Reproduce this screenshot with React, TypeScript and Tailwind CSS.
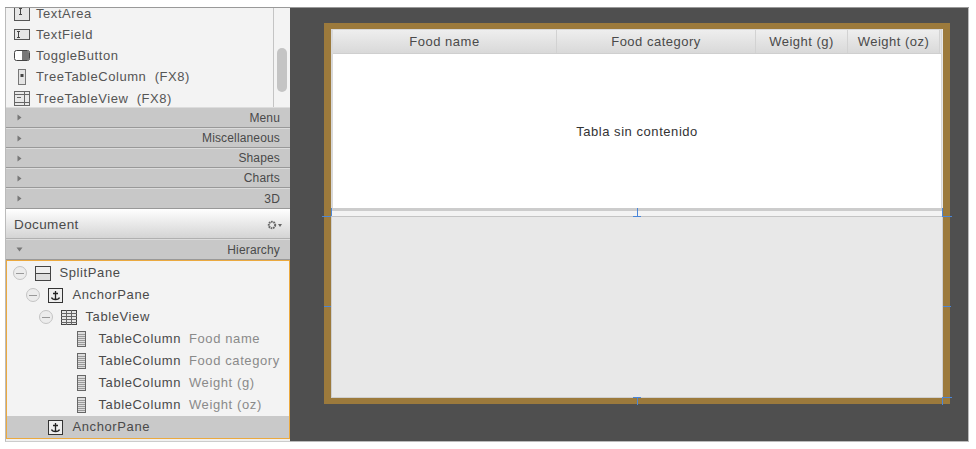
const font = "font-['Liberation_Sans',Arial,sans-serif]";

const paletteItems = [
  { name: "TextArea", icon: "area" },
  { name: "TextField", icon: "field" },
  { name: "ToggleButton", icon: "toggle" },
  { name: "TreeTableColumn  (FX8)", icon: "column" },
  { name: "TreeTableView  (FX8)", icon: "table" },
];

const sections = [
  { name: "Menu", h: "h-[21px]" },
  { name: "Miscellaneous", h: "h-[20px]" },
  { name: "Shapes", h: "h-[20px]" },
  { name: "Charts", h: "h-[20px]" },
  { name: "3D", h: "h-[21px]" },
];

const columns = [
  { name: "Food name", w: "w-[224px]" },
  { name: "Food category", w: "w-[199px]" },
  { name: "Weight (g)", w: "w-[92px]" },
  { name: "Weight (oz)", w: "w-[92px]" },
];

function PaletteIcon({ type }: { type: string }) {
  if (type === "area")
    return (
      <svg width="16" height="16" viewBox="0 0 16 16">
        <rect x="0.5" y="0.5" width="15" height="15" fill="#e6e6e6" stroke="#555" />
        <path d="M5 3.5h3M6.5 3.5v6M5 9.5h3" stroke="#444" fill="none" />
      </svg>
    );
  if (type === "field")
    return (
      <svg width="16" height="11" viewBox="0 0 16 11">
        <rect x="0.5" y="0.5" width="15" height="10" fill="#e6e6e6" stroke="#555" />
        <path d="M3 2.5h3M4.5 2.5v6M3 8.5h3" stroke="#444" fill="none" />
      </svg>
    );
  if (type === "toggle")
    return (
      <svg width="16" height="11" viewBox="0 0 16 11">
        <rect x="0.5" y="0.5" width="15" height="10" rx="2" fill="#fff" stroke="#444" />
        <path d="M8 1h5.500a1.500 1.500 0 0 1 1.500 1.500v6a1.500 1.500 0 0 1-1.500 1.500H8z" fill="#777" />
      </svg>
    );
  if (type === "column")
    return (
      <svg width="16" height="16" viewBox="0 0 16 16">
        <rect x="4.500" y="0.500" width="7" height="15" fill="#e4e4e4" stroke="#777" />
        <rect x="6.500" y="5" width="3" height="3" fill="#444" />
      </svg>
    );
  return (
    <svg width="16" height="15" viewBox="0 0 16 15">
      <rect x="0.5" y="0.5" width="15" height="14" fill="#e8e8e8" stroke="#666" />
      <path d="M0 3.500h16M0 11.500h16M10.500 0v15M3 6.500h4" stroke="#666" fill="none" />
    </svg>
  );
}

function Chevron({ open }: { open?: boolean }) {
  return (
    <svg width="7" height="7" viewBox="0 0 7 7" className="shrink-0">
      <path d={open ? "M0.500 1.500h6L3.500 5.500z" : "M1.500 0.500v6L5.500 3.500z"} fill="#777" />
    </svg>
  );
}

function SectionRow({ name, h, open }: { name: string; h: string; open?: boolean }) {
  return (
    <div className={`${h} flex items-center justify-between pl-[10px] pr-[10px] bg-[#c8c8c8] border-b border-b-[#999] border-t border-t-[#dcdcdc] text-[12px] tracking-[0.15px] text-[#4a4a4a]`}>
      <Chevron open={open} />
      <span>{name}</span>
    </div>
  );
}

function Collapse() {
  return (
    <span className="w-[14px] h-[14px] rounded-full border border-[#c4c4c4] bg-[#ececec] flex items-center justify-center shrink-0">
      <span className="w-[8px] h-px bg-[#999]" />
    </span>
  );
}

function TreeIcon({ type }: { type: string }) {
  if (type === "split")
    return (
      <svg width="16" height="15" viewBox="0 0 16 15">
        <rect x="0.5" y="0.5" width="15" height="14" fill="#eee" stroke="#444" />
        <path d="M0 7.500h16" stroke="#444" />
        <rect x="1" y="8" width="14" height="6" fill="#ddd" />
      </svg>
    );
  if (type === "anchor")
    return (
      <svg width="15" height="15" viewBox="0 0 15 15">
        <rect x="0.5" y="0.5" width="14" height="14" fill="#eee" stroke="#333" />
        <path d="M7.500 3v8.500M5 5.500h5M3.500 9.500c.5 1.500 2 2 4 2s3.500-.5 4-2" stroke="#222" strokeWidth="1.300" fill="none" />
      </svg>
    );
  if (type === "table")
    return (
      <svg width="16" height="15" viewBox="0 0 16 15">
        <rect x="0.5" y="0.5" width="15" height="14" fill="#e6e6e6" stroke="#444" />
        <path d="M0 3.500h16M0 6.500h16M0 9.500h16M0 12.500h16M5.500 0v15M10.500 0v15" stroke="#666" fill="none" />
      </svg>
    );
  return (
    <svg width="9" height="16" viewBox="0 0 9 16">
      <rect x="0.5" y="0.5" width="8" height="15" fill="#ddd" stroke="#666" />
      <path d="M1 3.500h7M1 5.500h7M1 7.500h7M1 9.500h7M1 11.500h7M1 13.500h7" stroke="#999" fill="none" />
    </svg>
  );
}

function TreeRow({ pad, icon, label, hint, toggle, selected }: {
  pad: string; icon: string; label: string; hint?: string; toggle?: boolean; selected?: boolean;
}) {
  return (
    <div className={`h-[22px] flex items-center ${pad} ${selected ? "bg-[#c9c9c9]" : ""}`}>
      <span className="w-[14px] mr-[8px] flex justify-center shrink-0">{toggle && <Collapse />}</span>
      <span className="w-[16px] mr-[9px] flex justify-center shrink-0"><TreeIcon type={icon} /></span>
      <span className="text-[#4a4a4a] whitespace-nowrap">{label}</span>
      {hint && <span className="ml-[8px] text-[#8a8a8a] whitespace-nowrap">{hint}</span>}
    </div>
  );
}

function Handle({ className }: { className: string }) {
  return <span className={`absolute bg-[#4a86d8] ${className}`} />;
}

export default function App() {
  return (
    <div className={`w-[976px] h-[449px] bg-white overflow-hidden pt-[7px] pl-[5px] ${font}`}>
      <div className="flex w-[964px] h-[435px] border-t border-t-[#999]">
        {/* left column */}
        <div className="w-[285px] shrink-0 flex flex-col border-l border-l-[#bbb] border-b border-b-[#ccc] bg-[#f1f1f1]">
          <div className="h-[99px] flex overflow-hidden bg-[#f3f3f3]">
            <div className="flex-1 -mt-[5.200px] text-[13px] leading-[11px] tracking-[0.55px] text-[#555] pl-[8px]">
              {paletteItems.map((item) => (
                <div key={item.name} className="h-[21.200px] flex items-center whitespace-pre">
                  <span className="w-[16px] mr-[6px] flex justify-center shrink-0"><PaletteIcon type={item.icon} /></span>
                  {item.name}
                </div>
              ))}
            </div>
            <div className="w-[17px] border-l border-l-[#c4c4c4] pt-[40px] pl-[3px]">
              <div className="w-[10px] h-[44px] rounded-[5px] bg-[#c4c4c4]" />
            </div>
          </div>
          {sections.map((s) => <SectionRow key={s.name} name={s.name} h={s.h} />)}
          <div className="h-[30px] flex items-center justify-between pl-[8px] pr-[8px] pt-[3px] bg-gradient-to-b from-white to-[#d4d4d4] text-[13.5px] tracking-[0.4px] text-[#4a4a4a] border-b border-b-[#b0b0b0]">
            <span>Document</span>
            <span className="flex items-center gap-px">
              <svg width="10" height="10" viewBox="0 0 10 10"><circle cx="5" cy="5" r="3.200" fill="none" stroke="#666" strokeWidth="2" strokeDasharray="1.600 0.700" /></svg>
              <svg width="4" height="3" viewBox="0 0 4 3"><path d="M0 0h4L2 3z" fill="#666" /></svg>
            </span>
          </div>
          <SectionRow name="Hierarchy" h="h-[21px]" open />
          <div className="h-[179px] border-[1.500px] border-[#eba93f] bg-[#f3f3f3] pt-px text-[13px] tracking-[0.6px]">
            <TreeRow pad="pl-[5.500px]" icon="split" label="SplitPane" toggle />
            <TreeRow pad="pl-[18.500px]" icon="anchor" label="AnchorPane" toggle />
            <TreeRow pad="pl-[31.500px]" icon="table" label="TableView" toggle />
            <TreeRow pad="pl-[44.500px]" icon="col" label="TableColumn" hint="Food name" />
            <TreeRow pad="pl-[44.500px]" icon="col" label="TableColumn" hint="Food category" />
            <TreeRow pad="pl-[44.500px]" icon="col" label="TableColumn" hint="Weight (g)" />
            <TreeRow pad="pl-[44.500px]" icon="col" label="TableColumn" hint="Weight (oz)" />
            <TreeRow pad="pl-[18.500px]" icon="anchor" label="AnchorPane" selected />
          </div>
        </div>

        {/* canvas */}
        <div className="flex-1 bg-[#4f4f4f] border-r border-r-[#bbb] border-b border-b-[#bbb] pl-[34px] pt-[15px]">
          <div className="relative w-[626px] h-[381px] bg-[#9c7a3c] pt-[6px] pb-[6px] pl-[7px]">
            <div className="h-full w-[612px] flex flex-col bg-[#e8e8e8]">
              <div className="h-[179px] w-[611px] flex flex-col bg-white border-l-2 border-r border-t border-[#d8d8d8]">
                <div className="h-[24px] flex bg-[#e4e4e4] border-b border-b-[#cfcfcf] text-[13px] tracking-[0.5px] text-[#4a4a4a]">
                  {columns.map((c) => (
                    <div key={c.name} className={`${c.w} flex items-center justify-center pt-px bg-gradient-to-b from-[#eeeeee] to-[#d9d9d9] border-r border-r-[#d2d2d2] whitespace-nowrap`}>
                      {c.name}
                    </div>
                  ))}
                </div>
                <div className="flex-1 flex items-center justify-center pt-[2px] text-[13px] tracking-[0.55px] text-[#333]">
                  Tabla sin contenido
                </div>
              </div>
              <div className="h-[9px] bg-[#f3f3f3] border-t-[3px] border-b border-t-[#cccccc] border-b-[#c4c4c4]" />
              <div className="flex-1 border-l border-r border-b border-[#cfcfcf]" />
            </div>
            <Handle className="h-px w-[9px] left-[-2px] top-[193px]" />
            <Handle className="w-px h-[8px] left-[7px] top-[185px]" />
            <Handle className="h-px w-[8px] left-[309px] top-[193px]" />
            <Handle className="w-px h-[8px] left-[313px] top-[185px]" />
            <Handle className="h-px w-[10px] left-[618px] top-[193px]" />
            <Handle className="w-px h-[8px] left-[618px] top-[185px]" />
            <Handle className="h-px w-[7px] left-0 top-[283px]" />
            <Handle className="h-px w-[8px] left-[619px] top-[283px]" />
            <Handle className="h-px w-[8px] left-[309px] top-[374px]" />
            <Handle className="w-px h-[8px] left-[313px] top-[374px]" />
            <Handle className="h-px w-[10px] left-[618px] top-[374px]" />
            <Handle className="w-px h-[8px] left-[618px] top-[374px]" />
          </div>
        </div>
      </div>
    </div>
  );
}
